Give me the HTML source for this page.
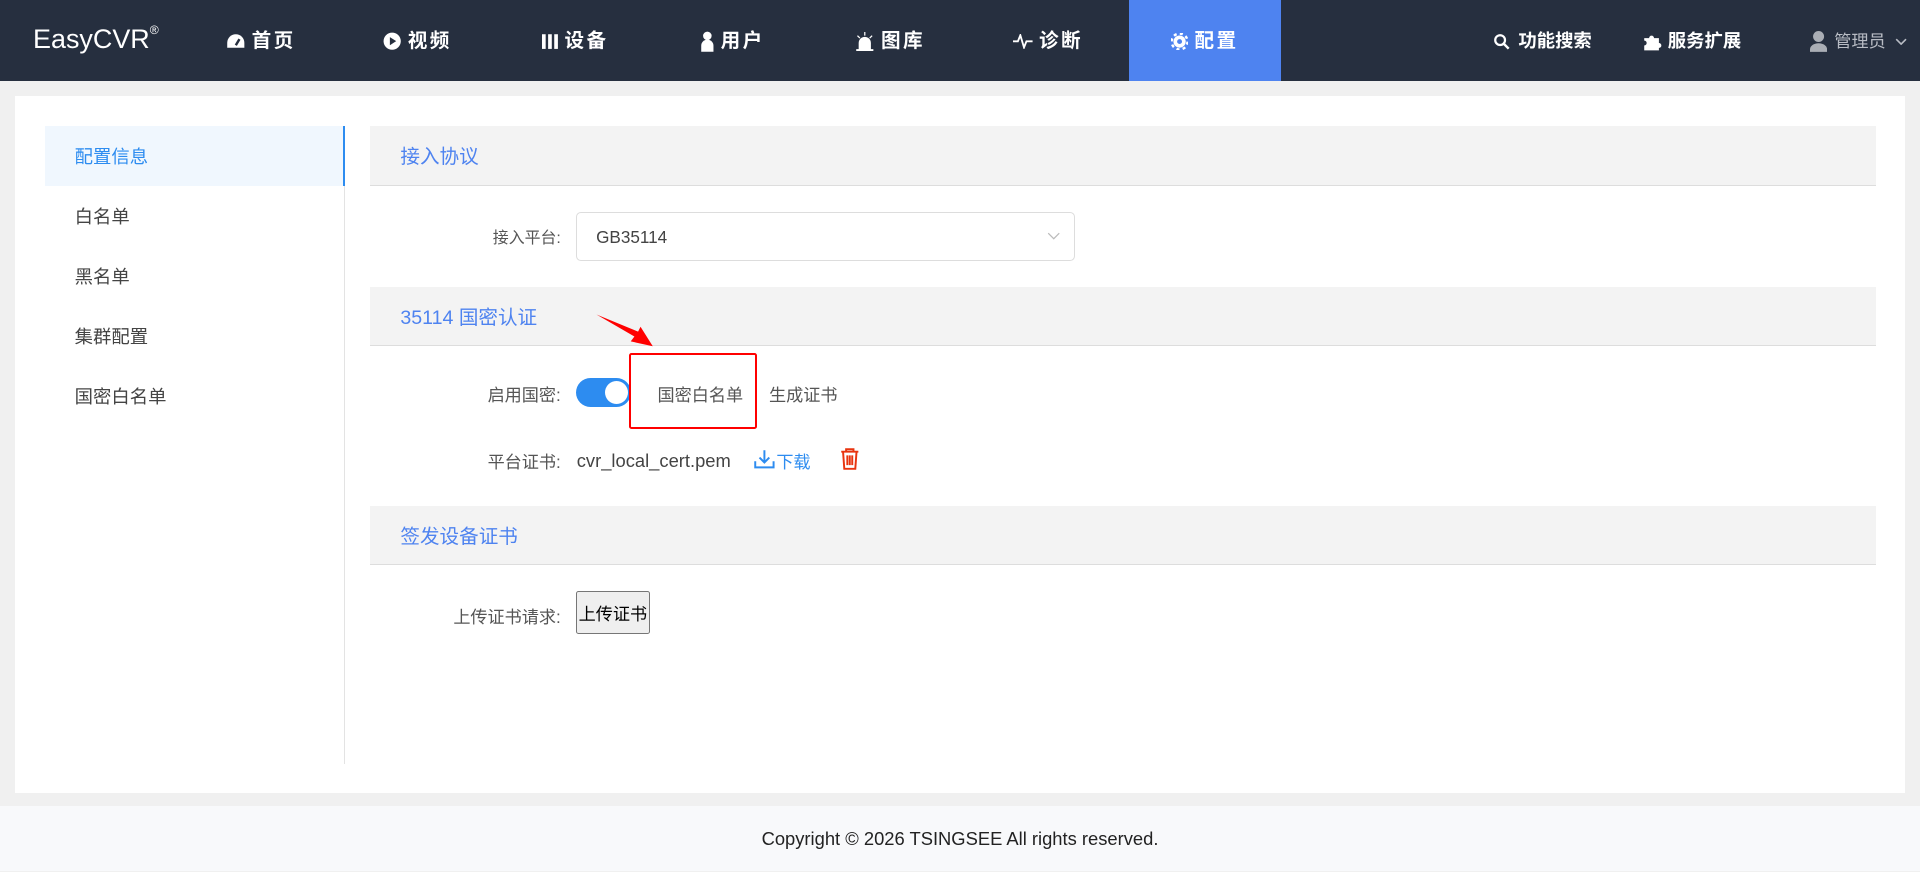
<!DOCTYPE html>
<html><head><meta charset="utf-8">
<style>
html,body{margin:0;padding:0;}
body{width:1568px;height:711px;zoom:1.22449;overflow:hidden;background:#f0f0f0;font-family:"Liberation Sans","Noto Sans CJK SC",sans-serif;position:relative;color:#555;}
.nav{position:absolute;left:0;top:0;width:1568px;height:66px;background:#262f3f;color:#fff;}
.logo{position:absolute;left:27px;top:20px;font-size:22px;color:#fff;}
.logo sup{font-size:10px;vertical-align:top;position:relative;top:-1px;}
.mi{position:absolute;top:0;height:68px;width:124px;display:flex;align-items:center;justify-content:center;font-size:16px;font-weight:bold;letter-spacing:2px;line-height:16px;}
.mi svg{margin-right:5px;}
.act{background:#4e83f0;height:66px;}
.r{position:absolute;top:0;height:68px;display:flex;align-items:center;font-size:15px;font-weight:bold;line-height:15px;}
.card{position:absolute;left:12px;top:78px;width:1544px;height:570px;background:#fff;}
.side{position:absolute;left:37px;top:103px;width:244px;}
.si{height:49px;line-height:51px;padding-left:24px;font-size:15px;color:#444;}
.si.a{background:#f0f7fe;color:#2d8cf0;}
.vl{position:absolute;left:281px;top:103px;width:1px;height:521px;background:#e3e3e3;}
.bl{position:absolute;left:280px;top:103px;width:2px;height:49px;background:#2d8cf0;}
.sh{position:absolute;left:302px;width:1230px;height:48px;background:#f3f3f3;border-bottom:1px solid #ddd;}
.sh span{position:absolute;left:25px;top:18px;font-size:16px;line-height:16px;color:#4e83f0;}
.lab{position:absolute;right:1110px;font-size:14px;line-height:14px;color:#555;}
.t{position:absolute;font-size:14px;line-height:14px;}
.footer{position:absolute;left:0;top:658px;width:1568px;height:53px;background:#f8f9fb;text-align:center;line-height:54px;font-size:15px;color:#222;}
</style></head><body>
<div class="nav">
 <div class="logo">EasyCVR<sup>®</sup></div>
 <div class="mi" style="left:151px"><svg width="16" height="14" viewBox="0 0 16 14"><path d="M8 1A7 7 0 0 0 1 8v4h14V8A7 7 0 0 0 8 1z" fill="#fff"/><path d="M8 10L11 5" stroke="#262f3f" stroke-width="2"/></svg>首页</div>
 <div class="mi" style="left:279px"><svg width="15" height="15" viewBox="0 0 16 16"><circle cx="8" cy="8" r="7.5" fill="#fff"/><path d="M6 4.5v7l5.5-3.5z" fill="#262f3f"/></svg>视频</div>
 <div class="mi" style="left:408px"><svg width="13" height="14" viewBox="0 0 13 14"><rect x="0" y="1" width="3" height="12" fill="#fff"/><rect x="5" y="1" width="3" height="12" fill="#fff"/><rect x="10" y="1" width="3" height="12" fill="#fff"/></svg>设备</div>
 <div class="mi" style="left:536px"><svg width="12" height="17" viewBox="0 0 12 17"><circle cx="6" cy="4" r="3.5" fill="#fff"/><path d="M1 17v-5a5 5 0 0 1 10 0v5z" fill="#fff"/></svg>用户</div>
 <div class="mi" style="left:665px"><svg width="16" height="16" viewBox="0 0 16 16"><path d="M3 15V9a5 5 0 0 1 10 0v6z" fill="#fff"/><rect x="1" y="14" width="14" height="2" fill="#fff"/><path d="M8 0v3M2 3l2 2M14 3l-2 2" stroke="#fff"/></svg>图库</div>
 <div class="mi" style="left:794px"><svg width="16" height="12" viewBox="0 0 16 12"><path d="M0 6h4l2-5 3 10 2-5h5" stroke="#fff" fill="none" stroke-width="1.5"/></svg>诊断</div>
 <div class="mi act" style="left:922px;height:66px;padding-top:2px;box-sizing:border-box"><svg width="14" height="14" viewBox="0 0 14 14"><circle cx="7" cy="7" r="5" fill="#fff"/><circle cx="7" cy="7" r="6.5" fill="none" stroke="#fff" stroke-width="2" stroke-dasharray="2.5 2.6"/><circle cx="7" cy="7" r="2" fill="#4e83f0"/></svg>配置</div>
 <div class="r" style="left:1220px"><svg width="13" height="13" viewBox="0 0 13 13" style="margin-right:7px"><circle cx="5" cy="5" r="4" fill="none" stroke="#fff" stroke-width="1.8"/><path d="M8 8l4 4" stroke="#fff" stroke-width="2"/></svg>功能搜索</div>
 <div class="r" style="left:1342px"><svg width="16" height="16" viewBox="0 0 16 16" style="margin-right:4px"><path d="M1 5h4a2 2 0 1 1 4 0h4v4a2 2 0 1 1 0 4v2H1v-4a2 2 0 1 0 0-4z" fill="#fff"/></svg>服务扩展</div>
 <div class="r" style="left:1478px;font-weight:normal;font-size:14px;color:#b8bcc4"><svg width="14" height="17" viewBox="0 0 14 17" style="margin-right:6px"><circle cx="7" cy="4.5" r="4.5" fill="#aaaeb5"/><path d="M0 17v-2a7 5 0 0 1 14 0v2z" fill="#aaaeb5"/></svg>管理员<svg width="10" height="6" viewBox="0 0 10 6" style="margin-left:8px"><path d="M1 1l4 4 4-4" stroke="#b8bcc4" fill="none" stroke-width="1.3"/></svg></div>
</div>
<div class="card"></div>
<div class="side">
 <div class="si a">配置信息</div><div class="si">白名单</div><div class="si">黑名单</div><div class="si">集群配置</div><div class="si">国密白名单</div>
</div>
<div class="vl"></div><div class="bl"></div>
<div class="sh" style="top:103px"><span>接入协议</span></div>
<div class="lab" style="top:189px;font-size:13px;line-height:13px">接入平台:</div>
<div style="position:absolute;left:470px;top:173px;width:408px;height:40px;border:1px solid #ddd;border-radius:4px;box-sizing:border-box;"><span style="position:absolute;left:16px;top:13px;font-size:14px;line-height:14px;color:#444">GB35114</span><svg width="11" height="7" viewBox="0 0 11 7" style="position:absolute;right:11px;top:16px"><path d="M1 1l4.5 4.5L10 1" stroke="#bbb" fill="none"/></svg></div>
<div class="sh" style="top:234px"><span>35114 国密认证</span></div>
<div class="lab" style="top:316px">启用国密:</div>
<div style="position:absolute;left:470px;top:309px;width:45px;height:23px;border-radius:12px;background:#2d8cf0"><div style="position:absolute;right:2px;top:2px;width:19px;height:19px;border-radius:50%;background:#fff"></div></div>
<div class="t" style="left:537px;top:316px">国密白名单</div>
<div class="t" style="left:628px;top:316px">生成证书</div>
<div style="position:absolute;left:514px;top:288px;width:104px;height:62px;border:2px solid #f00;box-sizing:border-box;border-radius:2px"></div>
<svg style="position:absolute;left:485px;top:255px" width="52" height="30" viewBox="0 0 52 30"><path d="M2 2L33 20L30 24L48 28L38 12L36 16z" fill="#f00"/></svg>
<div class="lab" style="top:371px">平台证书:</div>
<div class="t" style="left:471px;top:369px;font-size:15px;line-height:15px;color:#444">cvr_local_cert.pem</div>
<svg style="position:absolute;left:616px;top:367px" width="17" height="16" viewBox="0 0 17 16"><path d="M8.5 1v10M4.5 7l4 4 4-4M1 10v5h15v-5" stroke="#2d8cf0" fill="none" stroke-width="1.6"/></svg>
<div class="t" style="left:634px;top:371px;color:#2d8cf0">下载</div>
<svg style="position:absolute;left:686px;top:366px" width="16" height="18" viewBox="0 0 16 18"><path d="M1 3h14M5 3V1h6v2M2.5 3l1 14h9l1-14M6 6v8M8 6v8M10 6v8" stroke="#e8340f" fill="none" stroke-width="1.6"/></svg>
<div class="sh" style="top:413px"><span>签发设备证书</span></div>
<div class="lab" style="top:497px">上传证书请求:</div>
<div style="position:absolute;left:470px;top:483px;width:61px;height:35px;background:#efefef;border:1px solid #767676;box-sizing:border-box;border-radius:2px;font-size:14px;color:#000;line-height:36px;text-align:center">上传证书</div>
<div class="footer">Copyright © 2026 TSINGSEE All rights reserved.</div>
</body></html>
